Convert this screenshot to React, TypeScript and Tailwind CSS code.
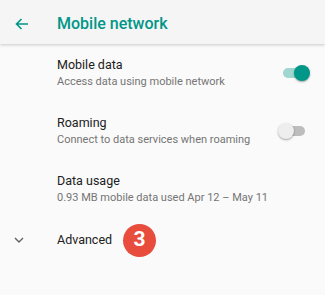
import React from 'react';

const Toggle = ({ on }: { on: boolean }) => (
  <div className="relative w-[32px] h-[20px] flex items-center">
    <div className={`w-[22px] h-[10px] rounded-full ml-[5px] ${on ? 'bg-[#9fd6cf]' : 'bg-[#bdbdbd]'}`}></div>
    <div
      className={`absolute top-[2px] w-[16px] h-[16px] rounded-full shadow-[0_1px_2px_rgba(0,0,0,0.35)] ${on ? 'left-[16px] bg-[#009688]' : 'left-0 bg-[#eeeeee]'}`}
    ></div>
  </div>
);

const Row = ({ title, sub, toggle }: { title: string; sub: string; toggle?: boolean }) => (
  <div className="flex items-center h-[58px] pl-[57px] pr-[15px]">
    <div className="flex-1 flex flex-col">
      <span className="text-[12.5px] leading-[18px] text-[#212121]">{title}</span>
      <span className="text-[11px] leading-[16px] text-[#757575]">{sub}</span>
    </div>
    {toggle !== undefined && <Toggle on={toggle} />}
  </div>
);

export default function App() {
  return (
    <div className="w-[325px] h-[295px] bg-[#fafafa] overflow-hidden" style={{ fontFamily: 'Roboto, "Noto Sans", sans-serif' }}>
      <div className="relative h-[44px] bg-[#f5f5f5] flex items-center pt-[4px] shadow-[0_1px_3px_rgba(0,0,0,0.2)]">
        <svg width="14" height="12" viewBox="0 0 14 12" className="ml-[15px]" fill="none" stroke="#009688" strokeWidth="1.6">
          <path d="M13 6H1.5M6.5 1L1.5 6l5 5" />
        </svg>
        <span className="ml-[28px] text-[16px] font-medium text-[#009688]">Mobile network</span>
      </div>
      <div>
        <Row title="Mobile data" sub="Access data using mobile network" toggle={true} />
        <Row title="Roaming" sub="Connect to data services when roaming" toggle={false} />
        <Row title="Data usage" sub="0.93 MB mobile data used Apr 12 – May 11" />
        <div className="flex items-center h-[44px]">
          <svg width="10" height="6" viewBox="0 0 10 6" className="ml-[14px]" fill="none" stroke="#616161" strokeWidth="1.4">
            <path d="M1 1l4 4 4-4" />
          </svg>
          <span className="ml-[33px] text-[12.5px] text-[#212121]">Advanced</span>
          <div className="ml-[11px] w-[33px] h-[33px] rounded-full bg-[#e74c3c] flex items-center justify-center text-white text-[21px] font-bold">3</div>
        </div>
      </div>
    </div>
  );
}
